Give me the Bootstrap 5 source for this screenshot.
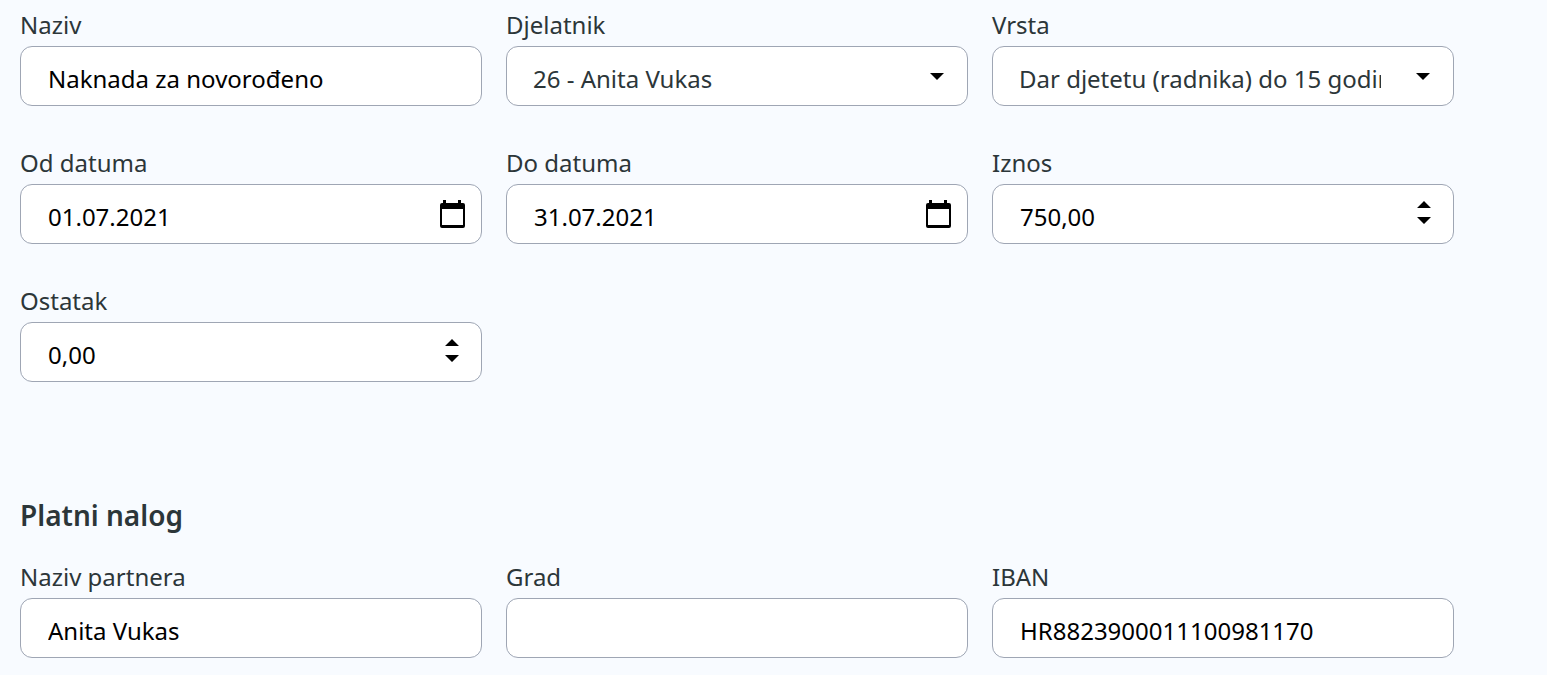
<!DOCTYPE html>
<html lang="hr">
<head>
<meta charset="utf-8">
<meta name="viewport" content="width=device-width, initial-scale=1">
<title>Naknada</title>
<link href="https://cdn.jsdelivr.net/npm/bootstrap@5.3.0/dist/css/bootstrap.min.css" rel="stylesheet">
<style>
body { background: #f8fbff; color: #2c3639; font-family: "Noto Sans", sans-serif; font-size: 24px; line-height: 32px; }
.page { padding: 9px 93px 16px 20px; }
.fields { --bs-gutter-x: 24px; row-gap: 41px; }
.form-label { display: block; margin-bottom: 5px; line-height: 32px; }
.form-control, .form-select { height: 60px; border: 1px solid #9fa6b4; border-radius: 12px; background-color: #fff; color: #000; font-size: 24px; line-height: 32px; padding: 9px 64px 4px 27px; }
.form-select { color: #2c3639; background-image: none; padding-left: 26px; padding-right: 72px; text-overflow: clip; }
.control-box { position: relative; }
.control-box svg { position: absolute; right: 16px; top: 16px; pointer-events: none; }
.section-title { font-size: 28px; line-height: 36px; font-weight: 600; margin: 115px 0 28px; }
</style>
</head>
<body>
<svg class="d-none" aria-hidden="true">
  <symbol id="caret" viewBox="0 0 28 28"><path d="M6 11h14l-7 7z"/></symbol>
  <symbol id="calendar" viewBox="0 0 28 28"><path fill-rule="evenodd" d="M5 0h3v3h12V0h3v3h2a2 2 0 0 1 2 2v21a2 2 0 0 1-2 2H4a2 2 0 0 1-2-2V5a2 2 0 0 1 2-2h1zM4 9v16h21V9z"/></symbol>
  <symbol id="spin" viewBox="0 0 28 28"><path d="M7 8l7-7 7 7zM7 17h14l-7 7z"/></symbol>
</svg>
<main class="page">
<form>
<div class="row fields">
  <div class="col-4">
    <label class="form-label" for="naziv">Naziv</label>
    <input class="form-control" id="naziv" type="text" value="Naknada za novorođeno">
  </div>
  <div class="col-4">
    <label class="form-label" for="djelatnik">Djelatnik</label>
    <div class="control-box">
      <select class="form-select" id="djelatnik"><option>26 - Anita Vukas</option></select>
      <svg width="28" height="28"><use href="#caret"/></svg>
    </div>
  </div>
  <div class="col-4">
    <label class="form-label" for="vrsta">Vrsta</label>
    <div class="control-box">
      <select class="form-select" id="vrsta"><option>Dar djetetu (radnika) do 15 godina</option></select>
      <svg width="28" height="28"><use href="#caret"/></svg>
    </div>
  </div>
  <div class="col-4">
    <label class="form-label" for="od">Od datuma</label>
    <div class="control-box">
      <input class="form-control" id="od" type="text" inputmode="numeric" value="01.07.2021">
      <svg width="28" height="28"><use href="#calendar"/></svg>
    </div>
  </div>
  <div class="col-4">
    <label class="form-label" for="do">Do datuma</label>
    <div class="control-box">
      <input class="form-control" id="do" type="text" inputmode="numeric" value="31.07.2021">
      <svg width="28" height="28"><use href="#calendar"/></svg>
    </div>
  </div>
  <div class="col-4">
    <label class="form-label" for="iznos">Iznos</label>
    <div class="control-box">
      <input class="form-control" id="iznos" type="text" inputmode="decimal" value="750,00">
      <svg width="28" height="28"><use href="#spin"/></svg>
    </div>
  </div>
  <div class="col-4">
    <label class="form-label" for="ostatak">Ostatak</label>
    <div class="control-box">
      <input class="form-control" id="ostatak" type="text" inputmode="decimal" value="0,00">
      <svg width="28" height="28"><use href="#spin"/></svg>
    </div>
  </div>
</div>
<h2 class="section-title">Platni nalog</h2>
<div class="row fields">
  <div class="col-4">
    <label class="form-label" for="partner">Naziv partnera</label>
    <input class="form-control" id="partner" type="text" value="Anita Vukas">
  </div>
  <div class="col-4">
    <label class="form-label" for="grad">Grad</label>
    <input class="form-control" id="grad" type="text">
  </div>
  <div class="col-4">
    <label class="form-label" for="iban">IBAN</label>
    <input class="form-control" id="iban" type="text" value="HR8823900011100981170">
  </div>
</div>
</form>
</main>
<script src="https://cdn.jsdelivr.net/npm/bootstrap@5.3.0/dist/js/bootstrap.bundle.min.js"></script>
</body>
</html>
